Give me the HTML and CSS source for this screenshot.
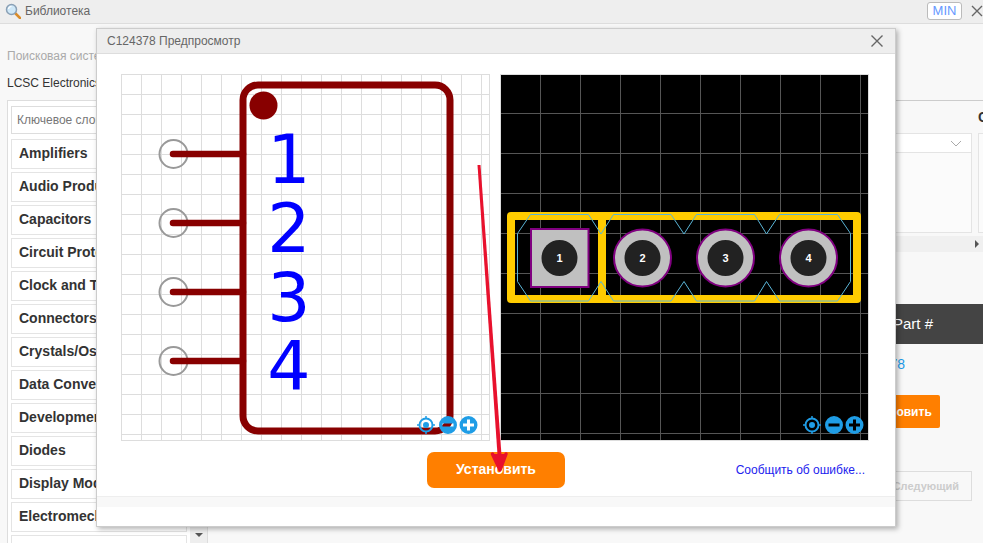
FILE: index.html
```html
<!DOCTYPE html>
<html lang="ru">
<head>
<meta charset="UTF-8">
<meta name="viewport" content="width=device-width, initial-scale=1.0">
<title>Библиотека</title>
<link rel="stylesheet" href="styles.css">
</head>
<body>

<!-- library window behind the preview -->
<header class="topbar">
  <svg class="topbar-icon" viewBox="0 0 16 16" width="16" height="16">
    <line x1="10" y1="10" x2="15" y2="15" stroke="#d98c2b" stroke-width="2.5" stroke-linecap="round"/>
    <circle cx="6.500" cy="6.500" r="5" fill="#cfe8f8" stroke="#8aa0b5" stroke-width="1.500"/>
    <path d="M3.500 6a3 3 0 0 1 3-2.500" fill="none" stroke="#fff" stroke-width="1.200"/>
  </svg>
  <span class="topbar-title">Библиотека</span>
  <button class="min-btn">MIN</button>
  <span class="topbar-close">
    <svg viewBox="0 0 12 12" width="12" height="12"><path d="M1 1L11 11M11 1L1 11" stroke="#666" stroke-width="1.400"/></svg>
  </span>
</header>

<main class="library">
  <p class="search-note">Поисковая система</p>
  <p class="source-name">LCSC Electronics</p>

  <div class="browser">
    <div class="category-panel">
      <div class="category-list">
        <input class="keyword" type="text" placeholder="Ключевое слово">
        <div class="category">Amplifiers</div>
        <div class="category">Audio Products</div>
        <div class="category">Capacitors</div>
        <div class="category">Circuit Protection</div>
        <div class="category">Clock and Timing</div>
        <div class="category">Connectors</div>
        <div class="category">Crystals/Oscillators</div>
        <div class="category">Data Converters</div>
        <div class="category">Development Boards</div>
        <div class="category">Diodes</div>
        <div class="category">Display Modules</div>
        <div class="category">Electromechanical</div>
        <div class="category"></div>
      </div>
      <div class="category-scroll"><span class="scroll-down"></span></div>
    </div>

    <div class="results">
      <div class="filters">
        <div class="filter filter-wide">
          <h4 class="filter-title">Package</h4>
          <div class="filter-box">
            <div class="filter-head">
              <svg viewBox="0 0 12 7" width="12" height="7"><path d="M1 1L6 6L11 1" fill="none" stroke="#aaa"/></svg>
            </div>
          </div>
        </div>
        <div class="filter">
          <h4 class="filter-title">Class</h4>
          <div class="filter-box"></div>
        </div>
      </div>
      <div class="hscroll"><span class="scroll-right"></span></div>
      <div class="part-head">Part #</div>
      <a class="part-link">C124378</a>
      <button class="part-install">Установить</button>
      <button class="part-next">Следующий</button>
    </div>
  </div>
</main>

<!-- preview dialog -->
<section class="preview">
  <div class="preview-head">
    <span>C124378 Предпросмотр</span>
    <svg viewBox="0 0 12 12" width="12" height="12"><path d="M.5 .5L11.500 11.500M11.500 .5L.5 11.500" stroke="#666" stroke-width="1.400"/></svg>
  </div>

  <div class="preview-body">
    <div class="panels">
      <svg class="panel" viewBox="121 74 369 367" width="369" height="367">
        <defs>
          <pattern id="schGrid" x="121" y="74" width="20" height="20" patternUnits="userSpaceOnUse">
            <path d="M.5 0V20M0 .5H20" stroke="#ddd" fill="none"/>
          </pattern>
          <pattern id="pcbGrid" x="500" y="73" width="40" height="40" patternUnits="userSpaceOnUse">
            <path d="M.5 0V40M0 .5H40" stroke="#555" fill="none"/>
          </pattern>
          <g id="zoomIcons">
            <g fill="none" stroke="#1f9de6">
              <circle r="6.500" stroke-width="2"/>
              <path d="M0 -9V-6M0 6V9M-9 0H-6M6 0H9" stroke-width="1.500"/>
            </g>
            <circle r="3" fill="#1f9de6"/>
            <path transform="translate(22 0)" fill="#1f9de6" fill-rule="evenodd" d="M-9 0a9 9 0 1 0 18 0a9 9 0 1 0 -18 0ZM-5.500 -1.500V1.500H5.500V-1.500Z"/>
            <path transform="translate(42.500 0)" fill="#1f9de6" fill-rule="evenodd" d="M-9 0a9 9 0 1 0 18 0a9 9 0 1 0 -18 0ZM-1.500 -5.500V-1.500H-5.500V1.500H-1.500V5.500H1.500V1.500H5.500V-1.500H1.500V-5.500Z"/>
          </g>
        </defs>
        <rect x="121" y="74" width="369" height="367" fill="#fff"/>
        <rect x="121" y="74" width="369" height="367" fill="url(#schGrid)"/>
        <rect x="121.500" y="74.500" width="368" height="366" fill="none" stroke="#ddd"/>

        <g fill="none" stroke="#999" stroke-width="2">
          <circle cx="173.500" cy="154" r="14"/>
          <circle cx="173.500" cy="223" r="14"/>
          <circle cx="173.500" cy="292" r="14"/>
          <circle cx="173.500" cy="361" r="14"/>
        </g>
        <g stroke="#880000" stroke-width="6.500" stroke-linecap="round">
          <line x1="173" y1="154" x2="243" y2="154"/>
          <line x1="173" y1="223" x2="243" y2="223"/>
          <line x1="173" y1="292" x2="243" y2="292"/>
          <line x1="173" y1="361" x2="243" y2="361"/>
        </g>
        <rect x="243" y="85" width="207" height="346" rx="15" fill="none" stroke="#880000" stroke-width="7"/>
        <circle cx="263.500" cy="105.500" r="14" fill="#880000"/>
        <g class="pin-num">
          <text x="289" y="182.500">1</text>
          <text x="289" y="251.500">2</text>
          <text x="289" y="320.500">3</text>
          <text x="289" y="389.500">4</text>
        </g>
        <use href="#zoomIcons" x="426" y="425"/>
      </svg>

      <svg class="panel pcb" viewBox="500 74 369 367" width="369" height="367">
        <rect x="500" y="74" width="369" height="367" fill="#000"/>
        <rect x="500" y="74" width="369" height="367" fill="url(#pcbGrid)"/>
        <rect x="500.500" y="74.500" width="368" height="366" fill="none" stroke="#ddd"/>

        <g fill="none" stroke="#ffcc00" stroke-width="8" stroke-linejoin="round">
          <rect x="511" y="216" width="346" height="83"/>
          <line x1="602" y1="216" x2="602" y2="299"/>
        </g>
        <path fill="none" stroke="#5ab4d6" d="M517.500 233.500L530.500 214.500H588.500L601 234L613.500 214.500H671L684 234L696.500 214.500H754.500L766.500 234L779.500 214.500H837.500L850.500 233.500V281.500L837.500 301H779.500L766.500 281.500L754.500 301H696.500L684 281.500L671 301H613.500L601 281.500L588.500 301H530.500L517.500 281.500Z"/>

        <g fill="#c0c0c0" stroke="#800080" stroke-width="2">
          <rect x="531" y="229" width="57.500" height="58"/>
          <circle cx="642.500" cy="258" r="28.500"/>
          <circle cx="725.500" cy="258" r="28.500"/>
          <circle cx="808.500" cy="258" r="28.500"/>
        </g>
        <g fill="#222">
          <circle cx="559.500" cy="258" r="18"/>
          <circle cx="642.500" cy="258" r="18"/>
          <circle cx="725.500" cy="258" r="18"/>
          <circle cx="808.500" cy="258" r="18"/>
        </g>
        <g class="pad-num">
          <text x="559.500" y="262">1</text>
          <text x="642.500" y="262">2</text>
          <text x="725.500" y="262">3</text>
          <text x="808.500" y="262">4</text>
        </g>
        <use href="#zoomIcons" x="812" y="425"/>
      </svg>
    </div>

    <div class="preview-actions">
      <button class="install-btn">Установить</button>
      <a class="report-link">Сообщить об ошибке...</a>
    </div>
  </div>

  <div class="preview-foot"></div>
</section>

<!-- red arrow drawn over the screenshot -->
<svg class="annotation" viewBox="0 0 983 543" width="983" height="543">
  <polygon points="477.500,165 480.500,165 502,462 498,462" fill="#e8112d"/>
  <path d="M492.500 454L500 470L506 454" fill="#e8112d" stroke="#e8112d" stroke-width="3.500" stroke-linecap="round" stroke-linejoin="round"/>
</svg>

</body>
</html>
```

FILE: styles.css
```css
html, body {
  height: 100%;
  margin: 0;
  overflow: hidden;
}

body {
  position: relative;
  background: #f8f8f8;
  font-family: 'Liberation Sans', Arial, sans-serif;
  font-size: 12px;
  color: #333;
}

/* top bar */
.topbar {
  display: flex;
  align-items: center;
  box-sizing: border-box;
  height: 24px;
  padding: 0 0 2px 5px;
  background: #eee;
  border-bottom: 1px solid #ddd;
}

.topbar-icon {
  margin-right: 4px;
}

.topbar-title {
  color: #666;
}

.min-btn {
  width: 35px;
  height: 18px;
  margin-left: auto;
  padding: 0;
  background: #fff;
  border: 1px solid #bbb;
  border-radius: 3px;
  font: 13px 'Liberation Sans', Arial, sans-serif;
  color: #6699ff;
}

.topbar-close {
  display: flex;
  margin-left: 9px;
}

/* library */
.search-note {
  margin: 0;
  padding: 25px 0 0 7px;
  line-height: 14px;
  color: #aaa;
}

.source-name {
  margin: 0;
  padding: 13px 0 0 7px;
  line-height: 14px;
}

.browser {
  display: flex;
  margin-top: 10px;
  margin-left: 7px;
}

.category-panel {
  display: flex;
  flex: none;
  width: 199px;
  height: 460px;
  background: #fff;
  border: 1px solid #ddd;
}

.category-list {
  display: flex;
  flex-direction: column;
  gap: 3px;
  width: 176px;
  padding: 5px 3px;
}

.keyword {
  flex: none;
  box-sizing: border-box;
  width: 176px;
  height: 28px;
  margin-bottom: 2px;
  padding: 0 5px;
  border: 1px solid #ddd;
  outline: none;
  font: 12px 'Liberation Sans', Arial, sans-serif;
}

.keyword::placeholder {
  color: #777;
}

.category {
  flex: none;
  box-sizing: border-box;
  height: 30px;
  padding-left: 7px;
  border: 1px solid #e4e4e4;
  font-size: 14px;
  font-weight: bold;
  line-height: 27px;
  white-space: nowrap;
  overflow: hidden;
}

.category-scroll {
  display: flex;
  flex: none;
  width: 17px;
  margin-left: auto;
  background: #f4f4f4;
  align-items: flex-start;
  justify-content: center;
  padding-top: 432px;
  box-sizing: border-box;
  background-image: linear-gradient(#fff 426px, #eee 426px);
}

.scroll-down {
  width: 0;
  height: 0;
  border-left: 4px solid transparent;
  border-right: 4px solid transparent;
  border-top: 4px solid #555;
}

.results {
  flex: 1;
  min-width: 0;
  margin-left: 7px;
  border-top: 1px solid #ccc;
}

.filters {
  display: flex;
  gap: 6px;
}

.filter {
  flex: none;
  width: 120px;
}

.filter-wide {
  width: 757px;
}

.filter-title {
  margin: 0;
  padding-top: 9px;
  height: 23px;
  font-size: 14px;
  line-height: 14px;
  white-space: nowrap;
}

.filter-wide .filter-title {
  visibility: hidden;
}

.filter-box {
  box-sizing: border-box;
  height: 100px;
  background: #fbfbfb;
  border: 1px solid #e4e4e4;
}

.filter-head {
  display: flex;
  align-items: center;
  justify-content: flex-end;
  height: 18px;
  padding-right: 9px;
  background: #fff;
  border-bottom: 1px solid #e4e4e4;
}

.hscroll {
  position: relative;
  height: 16px;
  margin-top: 3px;
  background: #f0f0f0;
}

.scroll-right {
  position: absolute;
  right: 4px;
  top: 4px;
  width: 0;
  height: 0;
  border-top: 4px solid transparent;
  border-bottom: 4px solid transparent;
  border-left: 4px solid #555;
}

.part-head {
  height: 40px;
  margin-top: 52px;
  padding-left: 678px;
  background: #444;
  color: #fff;
  font-size: 15px;
  line-height: 40px;
}

.part-link {
  display: block;
  width: 690px;
  margin-top: 12px;
  text-align: right;
  font-size: 14px;
  line-height: 16px;
  color: #1e9be8;
}

.part-install {
  display: block;
  width: 85px;
  height: 33px;
  margin: 23px 0 0 640px;
  padding: 0;
  background: #ff7f00;
  border: none;
  border-radius: 2px;
  color: #fff;
  font: bold 12px 'Liberation Sans', Arial, sans-serif;
}

.part-next {
  display: block;
  box-sizing: border-box;
  width: 90px;
  height: 30px;
  margin: 43px 0 0 667px;
  padding: 0 12px 0 0;
  background: transparent;
  border: 1px solid #ddd;
  color: #ccc;
  text-align: right;
  font: bold 11px 'Liberation Sans', Arial, sans-serif;
}

/* preview dialog */
.preview {
  position: absolute;
  left: 96px;
  top: 28px;
  box-sizing: border-box;
  width: 800px;
  height: 499px;
  background: #fff;
  border: 1px solid #ccc;
  box-shadow: 2px 2px 5px rgba(0, 0, 0, 0.3);
}

.preview-head {
  display: flex;
  align-items: center;
  justify-content: space-between;
  box-sizing: border-box;
  height: 25px;
  padding: 0 12px 0 10px;
  background: #eee;
  border-bottom: 1px solid #ddd;
  color: #666;
}

.preview-body {
  padding: 20px 24px 0;
}

.panels {
  display: flex;
  gap: 10px;
}

.panel {
  display: block;
  flex: none;
}

.pin-num text {
  font-family: 'DejaVu Sans', sans-serif;
  font-size: 68px;
  fill: #0000ff;
  text-anchor: middle;
}

.pad-num text {
  font-family: 'Liberation Sans', Arial, sans-serif;
  font-size: 11px;
  font-weight: bold;
  fill: #fff;
  text-anchor: middle;
}

.preview-actions {
  display: flex;
  align-items: center;
  margin-top: 11px;
  padding-left: 306px;
  padding-right: 6px;
}

.install-btn {
  width: 138px;
  height: 36px;
  padding: 0 0 3px;
  background: #ff7f00;
  border: none;
  border-radius: 7px;
  color: #fff;
  font: bold 14px 'Liberation Sans', Arial, sans-serif;
}

.report-link {
  margin-left: auto;
  color: #2222ee;
}

.preview-foot {
  height: 10px;
  margin-top: 8px;
  background: #f8f8f8;
  border-top: 1px solid #eee;
}

.annotation {
  position: absolute;
  left: 0;
  top: 0;
  pointer-events: none;
}
```
